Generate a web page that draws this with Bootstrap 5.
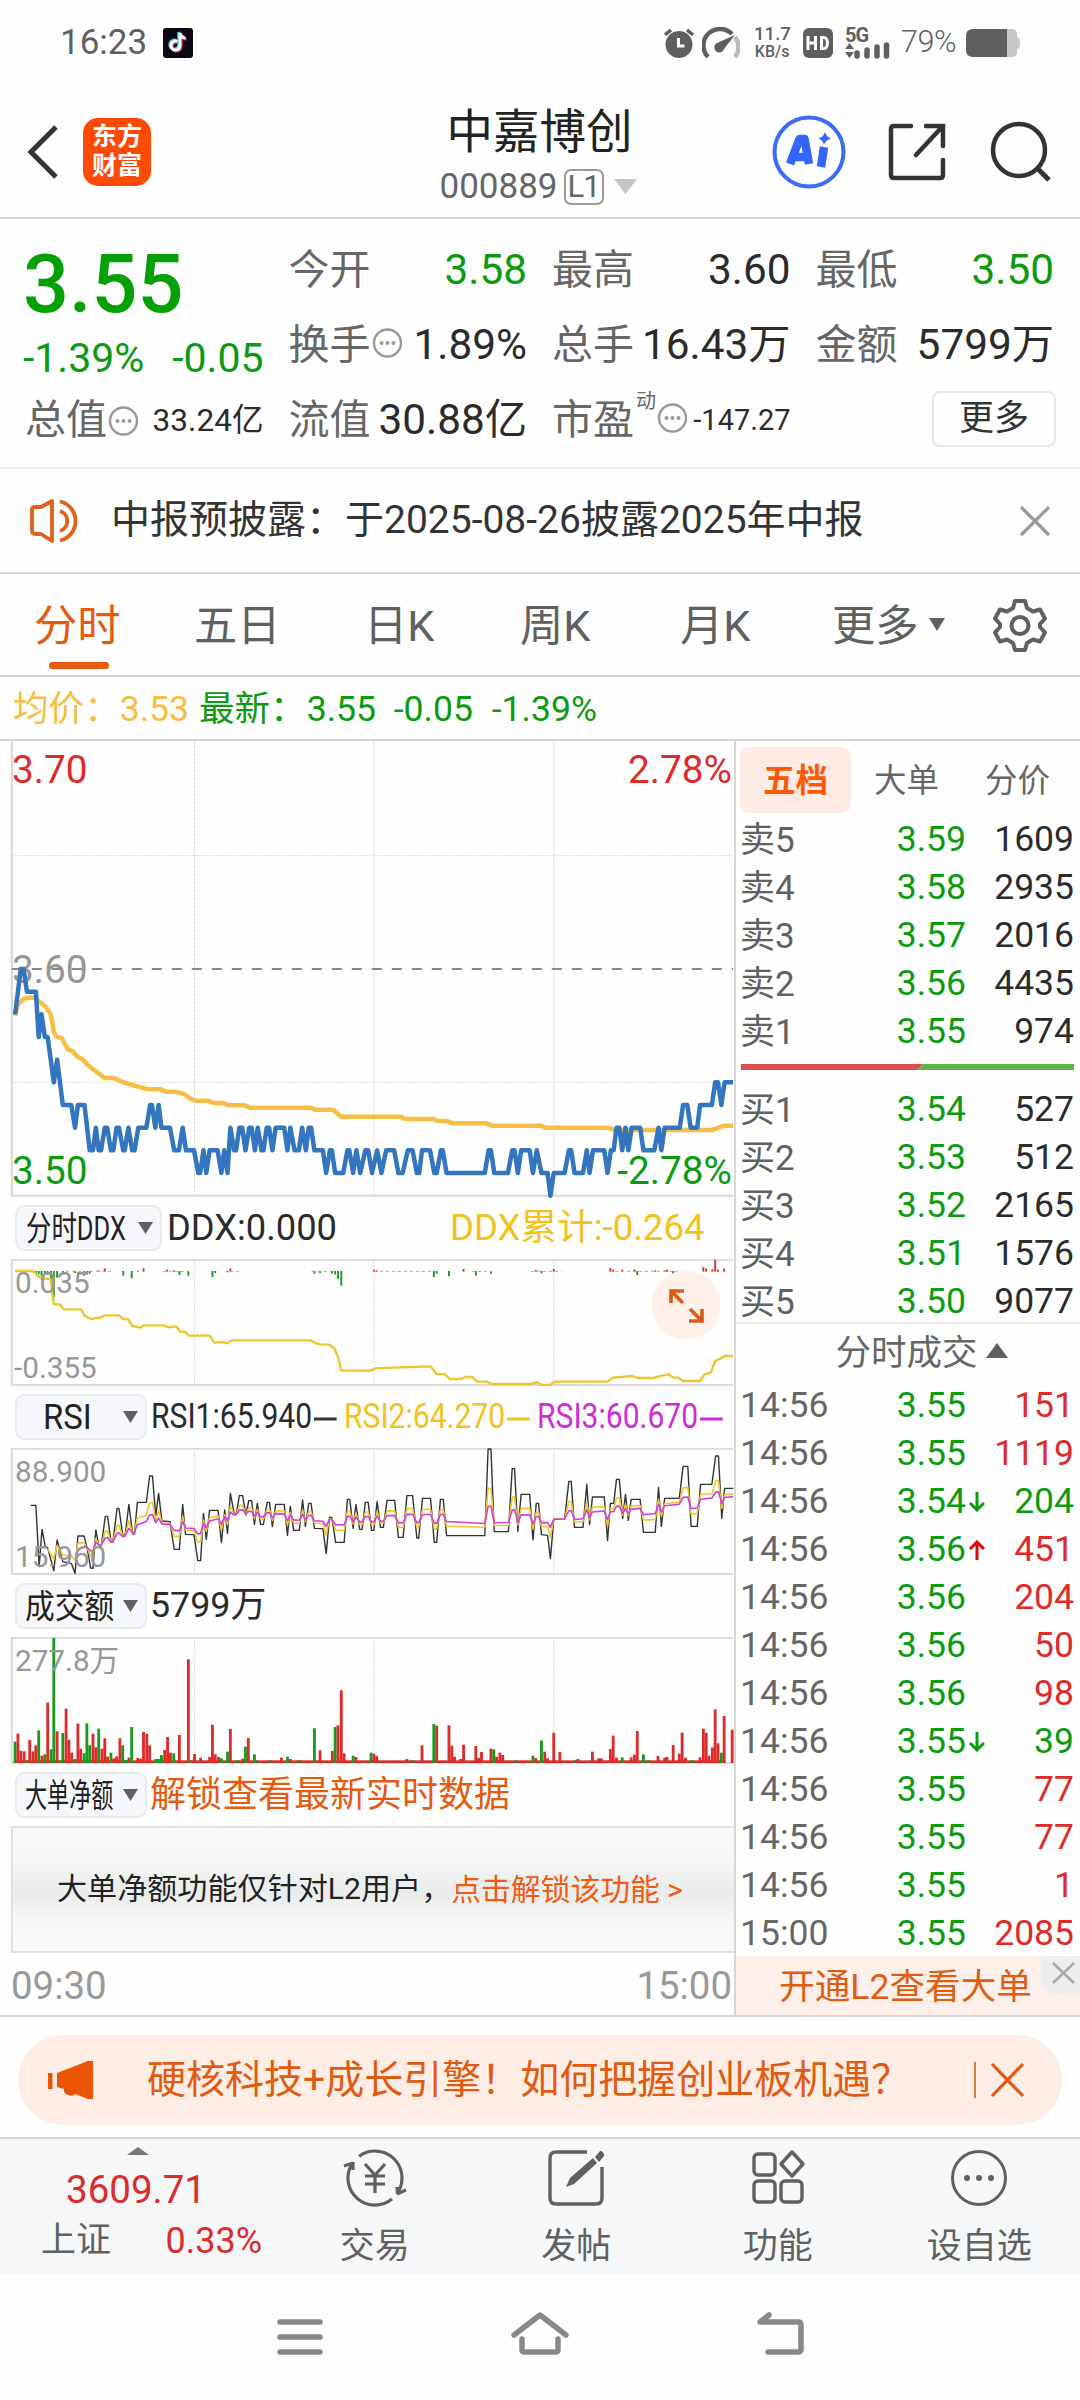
<!DOCTYPE html>
<html lang="zh-CN">
<head>
<meta charset="utf-8">
<meta name="viewport" content="width=device-width, initial-scale=1">
<title>中嘉博创 000889</title>
<link href="https://cdn.jsdelivr.net/npm/bootstrap@5.3.0/dist/css/bootstrap.min.css" rel="stylesheet">
<style>
:root{--up:#dd2a2a;--down:#0b9a10;--brand:#e35a10;--ink:#2b2b2b;--dim:#666;--line:#d6d6d6}
body{font-family:Roboto,"Noto Sans CJK SC",sans-serif;color:var(--ink);background:#fefefe;line-height:1;width:1080px;height:2400px;overflow:hidden}
svg{display:block;flex:none}
.c-up{color:var(--up)}.c-down{color:var(--down)}.c-dim{color:var(--dim)}.c-brand{color:var(--brand)}
.statusbar{height:85px;padding:0 60px 0 60px;color:#5f5f5f;font-size:35px}
.topbar{height:134px;border-bottom:2px solid var(--line);padding:2px 28px 0 27px}
.side-l{width:300px}.side-r{width:300px}
.stock-name{font-size:46.5px;color:#222}
.stock-code{font-size:35px;color:var(--dim)}
.lv{border:2px solid #999;border-radius:7px;width:40px;height:36px;font-size:31px;letter-spacing:-1px}
.logo-em{width:68px;height:68px;border-radius:15px;background:#ff4a06;color:#fff;font-size:25px;font-weight:700;line-height:29px}
.quote{height:250px;border-bottom:2px solid #eee;padding:14px 26px 0}
.quote .row{--bs-gutter-x:26px}
.q-line{height:75px;font-size:42.3px;white-space:nowrap}
.q-line .lbl{font-size:41px;color:var(--dim);margin-left:-1px}
.q-price{height:100px;font-size:81px;font-weight:500;color:#05a005;margin-left:-3px;padding-top:3px}
.q-chg{height:50px;font-size:41px;margin-left:-3px}
.more-btn{width:124px;height:56px;border:2px solid #e6e6e6;border-radius:8px;font-size:35px;margin:-4px -2px 0 0;color:#333}
.notice{height:105px;border-bottom:2px solid var(--line);padding:0 29px;font-size:39px;color:#333}
.tabs{height:103px;border-bottom:2px solid var(--line);font-size:43.3px;color:#606060}
.tab-txt{padding-top:4px}
.tab-on{color:var(--brand);position:relative;left:-2px}
.tab-on::after{content:"";position:absolute;left:15px;top:61px;width:60px;height:7px;border-radius:4px;background:var(--brand)}
.avg{height:64px;border-bottom:2px solid var(--line);padding:4px 0 0 13px;font-size:35.6px;white-space:pre}
.body-l{width:734px;height:1274px}
.body-r{width:346px;height:1274px;border-left:2px solid var(--line)}
.head{height:62px;font-size:35.8px;padding-left:15px;white-space:nowrap}
.pick{height:46px;border:2px solid #e8eaee;border-radius:9px;background:#f6f7fa;color:#222;font-size:33px}
.squeeze{display:inline-block;transform-origin:0 50%}
.sub{height:127px}
.tag{position:absolute;color:#979797;font-size:29.7px}
.main-tag{position:absolute;font-size:38.8px}
.locked{height:127px;margin-left:11px;border:2px solid #e0e0e0;border-right:0;font-size:30.1px;color:#222;background:linear-gradient(#f8f9f9 0,#f6f7f7 25%,#e9eceb 52%,#f6f7f7 75%,#f8f9f9 100%);padding-left:44px}
.times{height:62px;font-size:38.4px;color:#999;padding:5px 2px 0 11px}
.seg{font-size:32.5px;color:var(--dim);padding-left:4px}
.seg div{width:111px;height:66px;padding-top:3px}
.seg .on{background:#feece4;color:#fa5a08;font-weight:700;border-radius:9px}
.o-row{height:48px;font-size:35.5px;padding:4px 6px 0 4px}
.o-row .k{width:136px;font-size:35px;color:#606060}
.o-row .t{width:136px;font-size:35.5px;color:#666}
.o-row .p{width:90px;text-align:right;color:var(--down)}
.o-row .q{flex:1;text-align:right}
.foot-r{height:60px;background:#fdf0ea;color:#e05c10;font-size:35.6px;position:relative;padding:5px 5px 0 0}
.foot-x{position:absolute;right:0;top:0;width:39px;height:39px;background:#ededed;border-bottom-left-radius:18px}
.promo-wrap{height:124px;border-top:2px solid var(--line);border-bottom:2px solid var(--line);padding:18px 18px 0}
.promo{height:90px;border-radius:45px;background:#fdede4;color:#e05a10;font-size:39px;padding:0 37px 0 30px}
.bottombar{height:135px;background:#f6f7f9;color:#606060;font-size:35px}
.b-item{width:201.5px}
</style>
<script src="https://cdn.jsdelivr.net/npm/bootstrap@5.3.0/dist/js/bootstrap.bundle.min.js"></script>
</head>
<body>
<div class="statusbar d-flex align-items-center">
  <span>16:23</span>
  <svg class="ms-3" width="30" height="30" viewBox="0 0 30 30"><rect width="30" height="30" rx="3" fill="#0b0a14"/><g fill="none" stroke-width="3"><path d="M14.500 13.500a4.500 4.500 0 1 0 2.500 4.500V5c.5 3 2.500 5 5.500 5" stroke="#25e5e0" transform="translate(-1.200 -1)"/><path d="M14.500 13.500a4.500 4.500 0 1 0 2.500 4.500V5c.5 3 2.500 5 5.500 5" stroke="#fb2a55" transform="translate(1 1)"/><path d="M14.500 13.500a4.500 4.500 0 1 0 2.500 4.500V5c.5 3 2.500 5 5.500 5" stroke="#fff"/></g></svg>
  <div class="ms-auto d-flex align-items-center">
    <svg width="30" height="30" viewBox="0 0 30 30"><circle cx="15" cy="16.500" r="13.500" fill="#5f5f5f"/><path d="M14.500 10v8h6" stroke="#fff" stroke-width="3" fill="none"/><path d="M1 7l6-5M29 7l-6-5" stroke="#5f5f5f" stroke-width="3.500"/></svg>
    <svg style="margin-left:8px" width="38" height="32" viewBox="0 0 38 32"><path d="M6 30A16 16 0 0 1 30 7" fill="none" stroke="#5f5f5f" stroke-width="4.500"/><path d="M33 10a16 16 0 0 1 0 20" fill="none" stroke="#bbb" stroke-width="4.500"/><path d="M15 16L33 8 22 22a5 5 0 1 1-7-6z" fill="#5f5f5f"/></svg>
    <div class="text-center" style="width:36px;margin-left:14px;font-size:18.500px;line-height:17px;font-weight:500"><div>11.7</div><div style="font-size:16px">KB/s</div></div>
    <svg style="margin-left:13px" width="30" height="30" viewBox="0 0 30 30"><rect width="30" height="30" rx="6" fill="#5f5f5f"/><path d="M5 8v14M12.500 8v14M5 15h7M18.500 9.500v11h2.500c4.500 0 4.500-11 0-11z" fill="none" stroke="#fff" stroke-width="3"/></svg>
    <div style="margin-left:12px;width:46px;height:32px;position:relative">
      <svg width="46" height="32" viewBox="0 0 46 32"><path d="M4.500 16l4.500 6H0zM4.500 31l4.500-6H0z" fill="#5f5f5f"/><path d="M12 29v-3M22 29v-6M32 29v-9M41.500 29V18" stroke="#5f5f5f" stroke-width="5.500" stroke-linecap="round"/></svg>
      <b class="position-absolute top-0 start-0" style="font-size:20px;font-weight:700;margin-top:-2px;letter-spacing:-1px">5G</b>
    </div>
    <span style="font-size:30.500px;margin-left:10px;letter-spacing:-.5px;font-weight:300">79%</span>
    <svg style="margin-left:10px" width="54" height="28" viewBox="0 0 54 28"><path d="M38 0h8q5 0 5 5v3q3 0 3 6t-3 6v3q0 5-5 5h-8z" fill="#c8c8c8"/><path d="M7 0h34v28H7q-7 0-7-7V7q0-7 7-7z" fill="#5f5f5f"/></svg>
  </div>
</div>

<header class="topbar d-flex justify-content-between">
  <div class="side-l d-flex align-items-center">
    <svg width="32" height="56" viewBox="0 0 32 56"><path d="M29 3L4 28l25 25" fill="none" stroke="#333" stroke-width="5"/></svg>
    <div class="logo-em text-center pt-1" style="margin-left:24px">东方<br>财富</div>
  </div>
  <div class="text-center">
    <div class="stock-name" style="margin-top:22px">中嘉博创</div>
    <div class="stock-code d-flex align-items-center" style="margin:13px 0 0 -2px"><span>000889</span><span class="lv d-flex align-items-center justify-content-center" style="margin-left:6px">L1</span><svg style="margin-left:10px" width="24" height="16"><path d="M0 0h23L11.500 15z" fill="#c4c4c4"/></svg></div>
  </div>
  <div class="side-r d-flex align-items-center justify-content-end">
    <svg width="74" height="74" viewBox="0 0 74 74"><circle cx="37" cy="37" r="34.500" fill="none" stroke="#3c6cf3" stroke-width="4"/><path d="M18 49L27.500 24h5L37 49M23 42h12" fill="none" stroke="#3366ff" stroke-width="8.500" stroke-linejoin="round"/><path d="M52 32l-3 20" stroke="#3366ff" stroke-width="8.500"/><path d="M53 17q1.500 5 6 6.500-5 1.500-7 6-1.500-4.500-5.500-6 5-1.500 6.500-6.500z" fill="#3366ff"/></svg>
    <svg style="margin-left:42px" width="58" height="60" viewBox="0 0 58 60"><path d="M23 4H6q-3 0-3 3v46q0 3 3 3h46q3 0 3-3V38M38 4h17v20M54 5L28 33" fill="none" stroke="#333" stroke-width="4.500" stroke-linecap="round"/></svg>
    <svg style="margin-left:44px" width="62" height="62" viewBox="0 0 62 62"><circle cx="29" cy="29" r="26" fill="none" stroke="#333" stroke-width="4.500"/><path d="M48 48l11 11" stroke="#333" stroke-width="5"/></svg>
  </div>
</header>

<section class="quote"><div class="row">
  <div class="col-3">
    <div class="q-price d-flex align-items-center">3.55</div>
    <div class="q-chg d-flex align-items-center justify-content-between c-down"><span>-1.39%</span><span>-0.05</span></div>
    <div class="q-line d-flex align-items-center"><span class="lbl">总值</span><svg class="dots" width="32" height="32" viewBox="0 0 32 32"><use href="#dots"/></svg><span class="ms-auto" style="font-size:31.600px">33.24亿</span></div>
  </div>
  <div class="col-3">
    <div class="q-line d-flex align-items-center"><span class="lbl">今开</span><span class="ms-auto c-down">3.58</span></div>
    <div class="q-line d-flex align-items-center"><span class="lbl">换手</span><svg class="dots" width="32" height="32" viewBox="0 0 32 32" style="margin-top:-6px"><use href="#dots"/></svg><span class="ms-auto">1.89%</span></div>
    <div class="q-line d-flex align-items-center"><span class="lbl">流值</span><span class="ms-auto">30.88亿</span></div>
  </div>
  <div class="col-3">
    <div class="q-line d-flex align-items-center"><span class="lbl">最高</span><span class="ms-auto">3.60</span></div>
    <div class="q-line d-flex align-items-center"><span class="lbl">总手</span><span class="ms-auto">16.43万</span></div>
    <div class="q-line d-flex align-items-center"><span class="lbl">市盈</span><span class="c-dim align-self-start" style="font-size:20px;margin:8px 0 0 2px">动</span><svg class="dots" width="32" height="32" viewBox="0 0 32 32" style="margin-top:-6px"><use href="#dots"/></svg><span class="ms-auto" style="font-size:29px">-147.27</span></div>
  </div>
  <div class="col-3">
    <div class="q-line d-flex align-items-center"><span class="lbl">最低</span><span class="ms-auto c-down">3.50</span></div>
    <div class="q-line d-flex align-items-center"><span class="lbl">金额</span><span class="ms-auto">5799万</span></div>
    <div class="q-line d-flex align-items-center"><span class="more-btn ms-auto d-flex align-items-center justify-content-center">更多</span></div>
  </div>
</div></section>
<svg width="0" height="0" class="position-absolute"><defs><g id="dots"><circle cx="16.500" cy="16" r="13.500" fill="none" stroke="#999" stroke-width="2.400"/><g fill="#999"><circle cx="10.500" cy="16" r="2"/><circle cx="16.500" cy="16" r="2"/><circle cx="22.500" cy="16" r="2"/></g></g></defs></svg>

<div class="notice d-flex align-items-center">
  <svg width="52" height="46" viewBox="0 0 52 46"><g fill="none" stroke="#e0611c" stroke-width="3.800" stroke-linejoin="round"><path d="M3 12q0-3 3-3h6L23 3v40l-11-7H6q-3 0-3-3z"/><path d="M31 13a10.500 10.500 0 0 1 0 20M31 3.500a20 20 0 0 1 0 39"/></g></svg>
  <span style="margin-left:30px">中报预披露：于2025-08-26披露2025年中报</span>
  <svg class="ms-auto" width="32" height="32" viewBox="0 0 32 32"><path d="M2 2l28 28M30 2L2 30" stroke="#999" stroke-width="3.200"/></svg>
</div>

<nav class="tabs d-flex align-items-center" style="padding-left:36px">
  <span class="tab-txt tab-on" style="width:158px">分时</span><span class="tab-txt" style="width:170px">五日</span><span class="tab-txt" style="width:156px">日K</span><span class="tab-txt" style="width:160px">周K</span><span class="tab-txt" style="width:152px">月K</span><span class="tab-txt">更多</span>
  <svg style="margin-left:10px" width="17" height="14"><path d="M0 0h16L8 13z" fill="#606060"/></svg>
  <svg style="margin-left:47px" width="54" height="54" viewBox="0 0 54 54"><path d="M22 3h10l2 7 6 3.500 7-2 5 9-5 5.500v3l5 5.500-5 9-7-2-6 3.500-2 7H22l-2-7-6-3.500-7 2-5-9 5-5.500v-3l-5-5.500 5-9 7 2 6-3.500z" fill="none" stroke="#606060" stroke-width="4" stroke-linejoin="round"/><circle cx="27" cy="27.500" r="8.500" fill="none" stroke="#606060" stroke-width="4"/></svg>
</nav>

<div class="avg d-flex align-items-center"><span style="color:#f6bd45;width:186px">均价：3.53</span><span class="c-down">最新：</span><span class="c-down" style="margin-left:1px;width:87px">3.55</span><span class="c-down" style="width:98px">-0.05</span><span class="c-down">-1.39%</span></div>

<main class="d-flex">
  <div class="body-l">
    <div class="position-relative" style="height:456px">
      <svg id="price" width="735" height="456" viewBox="0 33 1557 1368" preserveAspectRatio="none" overflow="visible"></svg>
      <span class="main-tag c-up" style="left:12px;top:10px">3.70</span><span class="main-tag c-up" style="right:2px;top:10px">2.78%</span>
      <span class="main-tag" style="left:12px;top:210px;color:#979797;z-index:-1">3.60</span>
      <span class="main-tag c-down" style="left:12px;top:411px">3.50</span><span class="main-tag c-down" style="right:2px;top:411px">-2.78%</span>
    </div>
    <div class="head d-flex align-items-center">
      <div class="pick d-flex align-items-center" style="width:147px;padding-left:9px"><span style="width:112px"><span class="squeeze" style="transform:scaleX(.77)">分时DDX</span></span><svg width="16" height="13"><path d="M0 0h15L7.500 12z" fill="#606060"/></svg></div>
      <span style="margin-left:5px;width:283px;font-size:36.300px">DDX:0.000</span><span style="color:#f2c21c;font-size:36.600px">DDX累计:-0.264</span>
    </div>
    <div class="sub position-relative"><svg id="ddx" width="735" height="127" viewBox="0 207 1557 381" preserveAspectRatio="none"></svg>
      <span class="tag" style="left:15px;top:9px">0.035</span><span class="tag" style="left:14px;top:94px">-0.355</span>
      <svg class="position-absolute" style="left:651px;top:11px" width="70" height="70" viewBox="0 0 70 70"><circle cx="35" cy="35" r="34.500" fill="#fff0e9"/><g fill="none" stroke="#dd5a14" stroke-width="3.600"><path d="M20 33V21h13M21 22l11 11M51 39v12H38M50 50L39 39"/></g></svg>
    </div>
    <div class="head d-flex align-items-center">
      <div class="pick d-flex align-items-center" style="width:132px;padding-left:26px;font-size:35px"><span style="width:80px"><span class="squeeze" style="transform:scaleX(.94)">RSI</span></span><svg width="16" height="13"><path d="M0 0h15L7.500 12z" fill="#606060"/></svg></div>
      <span style="margin-left:4px;width:193px"><span class="squeeze" style="transform:scaleX(.84)">RSI1:65.940<svg class="d-inline-block align-middle" width="28" height="6" style="margin-left:2px"><path d="M0 3h27" stroke="#333" stroke-width="3"/></svg></span></span>
      <span style="width:193px;color:#f2c21c"><span class="squeeze" style="transform:scaleX(.84)">RSI2:64.270<svg class="d-inline-block align-middle" width="28" height="6" style="margin-left:2px"><path d="M0 3h27" stroke="#f2c21c" stroke-width="3"/></svg></span></span>
      <span style="width:193px;color:#cf2bd6"><span class="squeeze" style="transform:scaleX(.84)">RSI3:60.670<svg class="d-inline-block align-middle" width="28" height="6" style="margin-left:2px"><path d="M0 3h27" stroke="#cf2bd6" stroke-width="3"/></svg></span></span>
    </div>
    <div class="sub position-relative"><svg id="rsi" width="735" height="127" viewBox="0 174 1557 381" preserveAspectRatio="none"></svg>
      <span class="tag" style="left:15px;top:9px">88.900</span><span class="tag" style="left:15px;top:94px">15.960</span></div>
    <div class="head d-flex align-items-center">
      <div class="pick d-flex align-items-center" style="width:132px;padding-left:8px"><span style="width:98px"><span class="squeeze" style="transform:scaleX(.9)">成交额</span></span><svg width="16" height="13"><path d="M0 0h15L7.500 12z" fill="#606060"/></svg></div>
      <span style="margin-left:3px">5799万</span>
    </div>
    <div class="sub position-relative"><svg id="vol" width="735" height="127" viewBox="0 171 1557 381" preserveAspectRatio="none"></svg>
      <span class="tag" style="left:15px;top:9px">277.8万</span></div>
    <div class="head d-flex align-items-center">
      <div class="pick d-flex align-items-center" style="width:132px;padding-left:8px"><span style="width:98px"><span class="squeeze" style="transform:scaleX(.67);width:140px">大单净额</span></span><svg width="16" height="13"><path d="M0 0h15L7.500 12z" fill="#606060"/></svg></div>
      <span class="c-brand" style="margin-left:3px;font-size:36px">解锁查看最新实时数据</span>
    </div>
    <div class="locked d-flex align-items-center"><span>大单净额功能仅针对L2用户，</span><span style="color:#f25a10;font-size:29.800px">点击解锁该功能 &gt;</span></div>
    <div class="times d-flex align-items-center justify-content-between"><span>09:30</span><span>15:00</span></div>
  </div>

  <div class="body-r d-flex flex-column">
    <div class="seg d-flex" style="margin-top:6px;height:74px"><div class="on d-flex align-items-center justify-content-center">五档</div><div class="d-flex align-items-center justify-content-center">大单</div><div class="d-flex align-items-center justify-content-center">分价</div></div>
    <div id="asks" style="margin-top:-6px"></div>
    <svg style="margin:10px 0 0 5px" width="333" height="6"><path d="M0 0h182l-6 6H0z" fill="#e24b4b"/><path d="M182 0h151v6H176z" fill="#5db548"/></svg>
    <div id="bids" style="margin-top:14px;height:238px"></div>
    <div class="d-flex align-items-center justify-content-center c-dim" style="border-top:2px solid #e8e8e8;height:58px;font-size:35.500px;padding:3px 0 0 27px">分时成交<svg style="margin:-6px 0 0 8px" width="22" height="15"><path d="M0 15L11 0l11 15z" fill="#606060"/></svg></div>
    <div id="deals"></div>
    <div class="foot-r d-flex align-items-center justify-content-center mt-auto">开通L2查看大单<div class="foot-x"><svg width="39" height="36" viewBox="0 0 39 36"><path d="M12 7l21 20M33 7L12 27" stroke="#aaa" stroke-width="2.500"/></svg></div></div>
  </div>
</main>

<div class="promo-wrap"><div class="promo d-flex align-items-center">
  <svg width="46" height="40" viewBox="0 0 46 40"><path d="M0 13h4.500v16H0zM9 13L40 1h5v38h-5l-13-5q-2 3-7 1-5-2-4-6l-7-2z" fill="#ea5504"/></svg>
  <span style="margin-left:53px">硬核科技+成长引擎！如何把握创业板机遇？</span>
  <svg class="ms-auto" width="51" height="38" viewBox="0 0 51 38"><path d="M1 1v36" stroke="#e05a10" stroke-width="1.600"/><path d="M18 3l31 32M49 3L18 35" stroke="#e05a10" stroke-width="3.200"/></svg>
</div></div>

<footer class="bottombar d-flex">
  <div class="position-relative" style="width:274px">
    <svg style="margin:8px 0 0 127px" width="22" height="8"><path d="M0 8L11 0l11 8z" fill="#777"/></svg>
    <div class="c-up" style="font-size:38.500px;margin:16px 0 0 66px">3609.71</div>
    <div class="d-flex justify-content-between" style="margin:13px 12px 0 41px"><span>上证</span><span class="c-up" style="font-size:36px">0.33%</span></div>
  </div>
  <div class="b-item d-flex flex-column align-items-center"><svg style="margin-top:9px" width="68" height="60" viewBox="0 0 68 60"><g fill="none" stroke="#606060" stroke-width="3.200"><path d="M18.100 8.200a27 27 0 0 1 39.300 35.300M51 51A27 27 0 0 1 10.600 16.500M56.500 46l-.5-7M56 46l9-4M12 14v8M12 15l-9 3"/><path d="M24 16l10 11 10-11M34 27v18M24 28h20M24 36h20"/></g></svg><span style="margin-top:21px">交易</span></div>
  <div class="b-item d-flex flex-column align-items-center"><svg style="margin-top:9px" width="58" height="60" viewBox="0 0 58 60"><g fill="none" stroke="#606060" stroke-width="3.400"><path d="M40 4H9q-6 0-6 6v40q0 6 6 6h40q6 0 6-6V19"/></g><path d="M19 39l4-9L46 10l4 5-23 21zM48 9l5-6q4 0 4 5l-5 6z" fill="#606060"/></svg><span style="margin-top:21px">发帖</span></div>
  <div class="b-item d-flex flex-column align-items-center"><svg style="margin-top:9px" width="58" height="60" viewBox="0 0 58 60"><g fill="none" stroke="#606060" stroke-width="3.400"><rect x="5" y="6" width="21" height="21" rx="4"/><rect x="5" y="33" width="21" height="21" rx="4"/><rect x="32" y="33" width="21" height="21" rx="4"/><path d="M43 4l11 12-11 12-11-12z" stroke-linejoin="round"/></g></svg><span style="margin-top:21px">功能</span></div>
  <div class="b-item d-flex flex-column align-items-center"><svg style="margin-top:9px" width="58" height="60" viewBox="0 0 58 60"><circle cx="29" cy="30" r="26.500" fill="none" stroke="#606060" stroke-width="3"/><g fill="#606060"><circle cx="17" cy="30" r="3"/><circle cx="29" cy="30" r="3"/><circle cx="41" cy="30" r="3"/></g></svg><span style="margin-top:21px">设自选</span></div>
</footer>

<div class="d-flex justify-content-center" style="padding-top:37px">
  <svg width="528" height="46" viewBox="276 2311 528 46"><g fill="none" stroke="#888" stroke-width="5.500" stroke-linecap="round" stroke-linejoin="round"><path d="M280 2322h40M280 2337h40M280 2352h40"/><path d="M514 2335l26-20 26 20M522 2339v11q0 2 3 2h30q3 0 3-2v-11"/><path d="M768 2352h30q3 0 3-3v-24q0-3-3-3h-38l9-7"/></g></svg>
</div>

<script>
const ve = ' vector-effect="non-scaling-stroke" fill="none" stroke-linejoin="round" ';
const line = (d, c, w, extra = '') => `<path d="${d}" stroke="${c}" stroke-width="${w}"${ve}${extra}/>`;
const poly = p => 'M' + p.map(a => a.join(' ')).join('L');
const pairs = s => s.trim().split(/\s+/).map(a => a.split(',').map(Number));
const frame = (t, b) => [412, 792, 1173].map(x => line(`M${x} ${t}V${b}`, '#dcdcdc', 1, ' stroke-dasharray="2 1"')).join('')
  + line(`M1553 ${t + 2}H25V${b - 3}H1553`, '#dadada', 2);

/* intraday price: x, cents */
const px = pairs(`32,58 38,59 44,60 50,60 57,59 76,59 82,57 88,58 95,57 101,57 114,55 121,56 133,54 151,54 159,53 165,54 179,54 190,52 197,52 203,53 209,52 214,52 222,53 227,53 235,52 240,52 247,53 252,53 261,52 264,52 272,53 280,52 285,52 293,53 310,53 318,54 322,54 329,53 336,54 342,53 360,53 369,52 379,52 387,53 394,52 411,52 420,51 424,51 431,52 437,51 444,52 461,52 469,51 475,52 482,51 488,53 496,52 500,52 507,53 513,53 520,52 528,53 533,53 540,52 546,53 554,52 558,52 565,53 570,53 577,52 584,53 602,53 609,52 615,53 624,52 633,52 640,53 648,52 654,53 659,53 666,52 684,52 691,51 699,52 703,52 710,51 727,51 736,52 740,52 748,51 755,52 763,51 774,52 780,52 788,51 799,52 808,51 818,52 835,52 844,51 853,51 864,52 874,52 883,51 888,51 894,52 911,52 920,51 925,51 934,52 938,52 946,51 1027,51 1035,52 1040,52 1047,51 1076,51 1085,52 1090,52 1097,51 1104,52 1122,52 1129,51 1137,52 1147,51 1160,51 1166,50 1173,51 1196,51 1205,52 1210,52 1217,51 1235,51 1243,52 1249,51 1256,52 1280,52 1287,51 1294,52 1300,52 1306,53 1312,53 1318,52 1325,53 1331,52 1338,53 1356,53 1363,52 1386,52 1395,53 1401,52 1408,53 1440,53 1447,54 1456,54 1463,53 1477,53 1483,54 1508,54 1515,55 1521,55 1528,54 1535,55 1553,55`).map(([x, c]) => [x, 717 + (60 - c) * 68]);
const av = pairs(`32,857 38,822 50,808 57,803 72,803 90,822 98,832 108,855 114,905 120,920 131,925 144,958 154,964 164,980 175,988 188,1008 222,1044 240,1044 262,1057 295,1071 315,1078 340,1078 352,1085 372,1085 390,1092 404,1107 415,1112 440,1112 452,1119 473,1119 485,1126 518,1126 530,1133 658,1133 668,1139 705,1139 723,1160 850,1160 858,1167 918,1167 928,1173 945,1173 960,1180 1030,1180 1042,1187 1145,1187 1155,1193 1290,1193 1300,1200 1508,1200 1535,1187 1553,1187`);
price.innerHTML = [377, 1057].map(y => line(`M25 ${y}H1553`, '#dcdcdc', 1, ' stroke-dasharray="2 1"')).join('')
  + [412, 792, 1173].map(x => line(`M${x} 33V1397`, '#dcdcdc', 1, ' stroke-dasharray="3 1"')).join('')
  + line('M25 33V1397H1553', '#d6d6d6', 2)
  + line('M25 717H1553', '#888', 2, ' stroke-dasharray="10 10"')
  + line(poly(av), '#f7bd45', 4.5) + line(poly(px), '#3375be', 4.5);

/* DDX bars: x, top, height, g/r */
const dx = 'g76,6 g82,10 g88,14 g95,8 g101,12 g108,40 g114,78 g121,20 g133,10 g159,6 g178,14 g184,10 g190,8 r209,-4 r222,-10 g261,14 g279,22 r304,-10 r292,-3 r354,-6 r368,-4 g380,12 g399,14 g450,18 g456,6 g482,4 r488,-10 g666,8 g678,6 g703,8 g710,10 g716,24 g723,44 r792,-6 r798,-4 g919,18 g925,8 g951,16 r982,-8 g1008,14 g1040,8 r1135,-5 g1147,7 r1173,-8 r1293,-11 r1299,-6 r1318,-6 r1344,-7 g1350,12 r1388,-4 r1408,-4 r1413,-6 g1426,12 g1445,12 r1490,-14 r1496,-10 r1509,-7 r1515,-36 r1521,-6 r1534,-9';
ddx.innerHTML = frame(207, 588) + dx.split(' ').map(s => { const [x, h] = s.slice(1).split(',').map(Number);
  return `<rect x="${x - 2}" y="${h < 0 ? 245 + h : 243}" width="4" height="${Math.abs(h)}" fill="${s[0] == 'g' ? '#159a1c' : '#d8302e'}"/>`; }).join('')
  + line('M140 244H240M345 244H400M488 244H512M660 244H700M792 244H920M1000 244H1042M1125 244H1190M1290 244H1445', '#dd9a8a', 1, ' stroke-dasharray="3 3"')
  + line(poly(pairs('32,243 70,243 80,257 88,265 107,267 114,342 127,344 135,358 172,358 179,377 192,387 212,383 222,376 252,376 262,387 272,388 280,408 297,413 305,406 348,406 356,412 373,409 382,425 392,425 400,437 444,437 454,458 470,456 482,460 490,451 658,451 668,459 678,463 697,464 708,474 716,500 723,542 785,542 795,535 850,532 912,529 925,552 943,553 953,567 978,567 985,561 1000,561 1010,574 1032,575 1042,582 1125,582 1137,577 1147,584 1165,585 1175,575 1287,575 1298,563 1340,558 1350,564 1385,564 1395,559 1417,553 1425,562 1437,563 1447,573 1483,573 1493,553 1506,547 1515,513 1526,506 1536,498 1553,498')), '#eec52d', 2.4);

/* RSI */
const r1 = pairs('65,346 76,346 83,530 89,418 96,470 101,474 114,542 121,450 133,515 151,520 159,550 165,438 178,438 184,470 192,534 197,535 203,420 210,472 214,474 223,379 228,379 235,455 239,457 248,355 252,355 260,435 265,436 273,343 281,432 285,432 291,337 310,337 317,258 323,258 330,378 336,310 343,393 360,395 369,478 380,478 387,343 393,433 411,434 419,512 425,512 431,370 437,448 444,361 462,361 469,457 476,360 482,430 488,310 496,370 501,370 507,317 514,317 521,375 527,332 533,332 539,403 545,340 552,403 558,403 566,337 571,337 577,410 584,343 602,343 609,436 615,349 622,421 634,421 641,330 647,409 654,340 659,340 666,415 684,416 691,491 698,382 703,382 711,457 729,457 736,328 741,328 748,415 754,343 762,418 767,418 774,337 780,337 787,421 792,421 799,334 806,412 812,412 820,331 836,331 844,442 854,442 862,317 874,317 883,444 887,444 895,325 912,325 920,457 925,457 933,328 939,328 946,437 1027,437 1034,177 1040,177 1047,425 1077,425 1085,236 1090,236 1097,424 1104,313 1122,313 1129,450 1136,340 1141,340 1147,434 1160,436 1166,505 1173,388 1196,388 1205,274 1210,274 1217,412 1235,412 1243,283 1249,403 1255,321 1280,321 1287,452 1293,340 1300,340 1306,268 1312,268 1319,385 1325,313 1331,391 1337,328 1356,328 1363,427 1388,427 1395,292 1401,409 1408,325 1439,325 1447,229 1457,229 1464,409 1477,409 1484,283 1508,283 1516,198 1522,198 1529,385 1535,295 1553,295');
const base = pairs('65,480 165,478 240,455 320,402 420,412 510,370 720,392 950,384 1036,392 1180,388 1290,372 1380,358 1450,345 1553,326');
const mid = x => { let i = 1; while (i < base.length - 1 && base[i][0] < x) i++; const [a, b] = [base[i - 1], base[i]]; return a[1] + (b[1] - a[1]) * (x - a[0]) / (b[0] - a[0]); };
const damp = (k, from) => r1.filter(p => p[0] >= from).map(([x, y]) => [x, (mid(x) + k * (y - mid(x))).toFixed(1)]);
rsi.innerHTML = frame(174, 555) + line(poly(r1), '#333', 1.4) + line(poly(damp(.45, 101)), '#efc62c', 1.6) + line(poly(damp(.2, 178)), '#d43cd8', 1.6);

/* turnover bars: colour, x, top */
const vb = 'g32,485 r38,461 r44,512 r51,514 g57,541 r63,480 r70,514 r76,496 g82,451 r89,527 g95,523 r101,368 g108,508 g114,174 r121,454 g127,541 g133,459 r140,386 r146,479 r152,518 g159,537 r165,431 r171,506 g178,520 g184,430 g190,496 r197,461 r203,502 g209,446 r216,506 r222,475 r228,530 g235,518 r241,535 r247,529 r254,475 g260,496 g266,541 r273,533 g279,441 r292,534 r298,536 r304,456 r311,461 r317,496 g330,537 g336,537 g342,525 r349,510 r355,471 r361,518 g368,520 r380,465 r399,238 r412,522 r425,533 r444,531 r450,434 r456,523 r463,531 g469,535 g482,515 r488,447 r514,536 g520,500 r526,474 g539,523 r596,533 g609,530 r615,537 g666,445 r678,511 r704,513 g710,441 r716,436 r723,331 r729,520 g748,527 r754,531 g786,518 r792,521 r798,528 r862,537 r894,496 g919,432 r925,437 r951,436 r957,497 r963,530 r976,537 r982,494 r1008,498 r1014,534 r1020,516 r1040,506 g1046,508 r1052,530 r1059,518 r1065,525 g1129,527 r1135,534 g1147,481 r1154,515 r1160,535 r1173,458 r1186,516 r1224,537 r1255,515 r1268,535 r1274,535 r1293,507 r1299,467 r1306,533 g1318,532 r1337,532 r1344,524 r1350,453 g1363,523 r1394,528 r1408,533 r1413,531 r1426,495 r1439,521 r1445,458 r1452,533 r1483,532 r1490,446 r1496,458 r1502,527 r1509,502 r1515,388 r1521,490 g1528,518 r1534,408 r1551,449';
vol.innerHTML = frame(171, 552) + '<rect x="29" y="541" width="1508" height="8" fill="#c8332f"/>'
  + [266, 330, 400, 500, 540, 570, 630, 870, 1090, 1216, 1370, 1462].map(x => `<rect x="${x}" y="541" width="6" height="8" fill="#2a8a2a"/>`).join('')
  + vb.split(' ').map(s => { const [x, y] = s.slice(1).split(',').map(Number); return `<rect x="${x - 3}" y="${y}" width="6" height="${549 - y}" fill="${s[0] == 'g' ? '#189a1e' : '#dd2b2c'}"/>`; }).join('');

/* order book and deals */
const book = a => a.map(([k, p, q]) => `<div class="o-row d-flex align-items-center"><span class="k">${k}</span><span class="p">${p}</span><span class="q">${q}</span></div>`).join('');
asks.innerHTML = book([['卖5', '3.59', 1609], ['卖4', '3.58', 2935], ['卖3', '3.57', 2016], ['卖2', '3.56', 4435], ['卖1', '3.55', 974]]);
bids.innerHTML = book([['买1', '3.54', 527], ['买2', '3.53', 512], ['买3', '3.52', 2165], ['买4', '3.51', 1576], ['买5', '3.50', 9077]]);
const arrow = { d: '<svg width="20" height="20" viewBox="0 0 20 20"><path d="M11 0v18M4 11l7 7 7-7" fill="none" stroke="#0b9a10" stroke-width="3"/></svg>', u: '<svg width="20" height="20" viewBox="0 0 20 20"><path d="M11 20V2M4 9l7-7 7 7" fill="none" stroke="#dd0a0a" stroke-width="3"/></svg>' };
deals.innerHTML = [['3.55', 151], ['3.55', 1119], ['3.54', 204, 'd'], ['3.56', 451, 'u'], ['3.56', 204], ['3.56', 50], ['3.56', 98], ['3.55', 39, 'd'], ['3.55', 77], ['3.55', 77], ['3.55', 1], ['3.55', 2085]]
  .map(([p, q, a], i) => `<div class="o-row d-flex align-items-center"><span class="t">${i == 11 ? '15:00' : '14:56'}</span><span class="p">${p}</span>${a ? arrow[a] : ''}<span class="q ${a == 'd' ? 'c-down' : 'c-up'}">${q}</span></div>`).join('');
</script>
</body>
</html>
